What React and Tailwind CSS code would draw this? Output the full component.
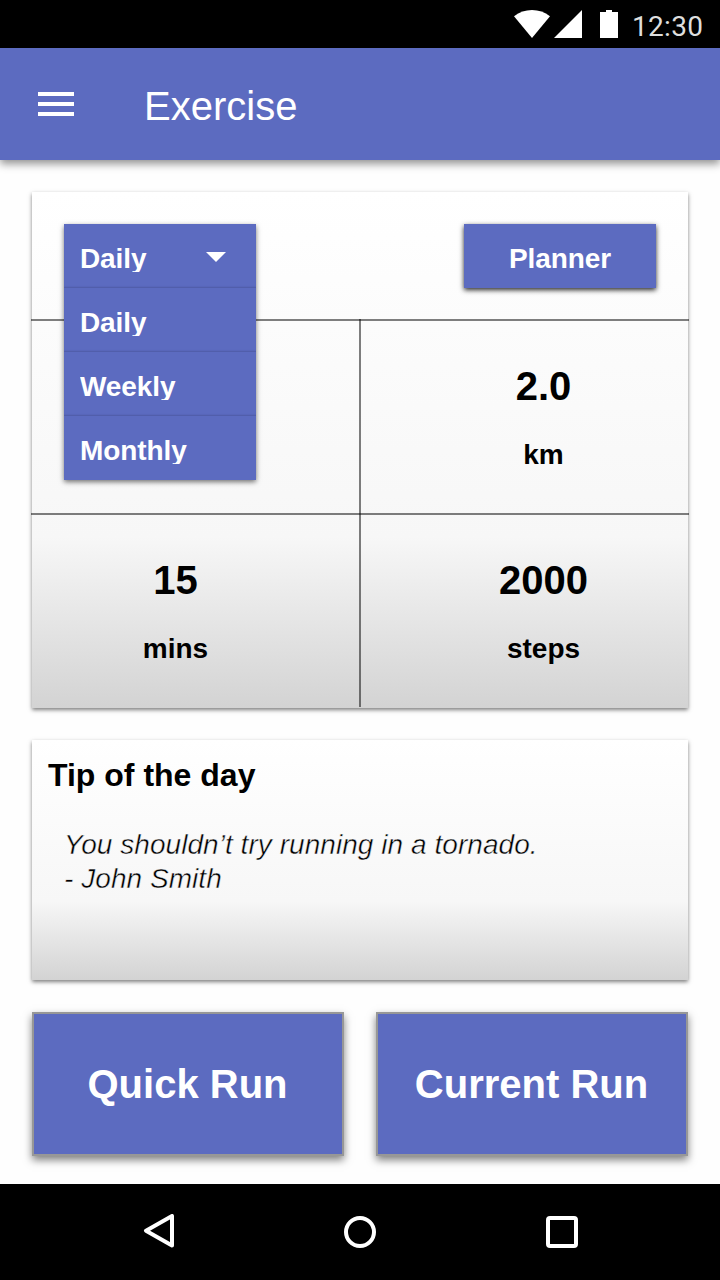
const PERIODS = ["Daily", "Weekly", "Monthly"];

function StatusBar() {
  return (
    <div className="flex h-12 shrink-0 items-center justify-end bg-black pr-4 text-[#dedede]">
      <svg className="h-7 w-[104px]" viewBox="0 0 104 28" fill="#fff">
        <path d="M0 6.2Q8 0 18 0T36 6.2L18 28Z" />
        <path d="M68 0V28H40Z" />
        <path d="M86 2H92V0H98V2H104V28H86Z" />
      </svg>
      <span className="ml-[14px] mt-[6px] w-[72px] whitespace-nowrap font-['Roboto',sans-serif] text-[28px] font-normal leading-8 tracking-[0.3px]">
        12:30
      </span>
    </div>
  );
}

function AppBar() {
  return (
    <header className="flex h-28 shrink-0 items-center bg-[#5c6bc0] pl-[38px] text-white shadow-[0_4px_8px_rgba(0,0,0,0.42)]">
      <button aria-label="Menu" className="flex w-9 flex-col gap-[6px]">
        <span className="h-1 bg-white" />
        <span className="h-1 bg-white" />
        <span className="h-1 bg-white" />
      </button>
      <h1 className="ml-[70px] mt-1 text-[40px] leading-[48px]">Exercise</h1>
    </header>
  );
}

function PeriodRow({ label, caret, last }) {
  return (
    <div
      className={
        last
          ? "flex h-16 items-start px-4 pt-4"
          : "flex h-16 items-start px-4 pt-4 shadow-[inset_0_-1px_0_#515eab,inset_0_-2px_1px_#5866b8]"
      }
    >
      <span className="h-8 overflow-hidden pr-1 text-[28px] font-bold leading-[38px] tracking-[-0.1px]">{label}</span>
      {caret && (
        <svg className="ml-auto mr-[14px] mt-3 h-[10px] w-5" viewBox="0 0 20 10" fill="#fff">
          <path d="M0 0H20L10 10Z" />
        </svg>
      )}
    </div>
  );
}

function PeriodMenu() {
  return (
    <div className="relative h-16 w-48">
      <div className="absolute inset-x-0 top-0 z-10 bg-[#5c6bc0] text-white shadow-[0_2px_5px_rgba(0,0,0,0.55)]">
        <PeriodRow label="Daily" caret />
        {PERIODS.map((p, i) => (
          <PeriodRow key={p} label={p} last={i === PERIODS.length - 1} />
        ))}
      </div>
    </div>
  );
}

function Stat({ value, unit }) {
  return (
    <div className="flex flex-col items-center gap-[29px] text-black">
      <span className="text-[40px] font-bold leading-[48px]">{value}</span>
      <span className="text-[28px] font-bold leading-8">{unit}</span>
    </div>
  );
}

function StatRow({ left, right }) {
  return (
    <div className="-mx-px flex h-[194px] border-t-2 border-black/50">
      <div className="w-[328px] pr-[39px] pt-[41px]">{left}</div>
      <div className="-mt-[2px] flex-1 border-l-2 border-black/50 pl-[37px] pt-[43px]">{right}</div>
    </div>
  );
}

const card =
  "bg-[linear-gradient(180deg,#ffffff_0%,#f7f7f7_67%,#d3d3d3_100%)] shadow-[0_2px_4px_rgba(0,0,0,0.5)]";

function BigButton({ children }) {
  return (
    <button className="flex h-36 flex-1 items-center justify-center border-2 border-[#979797] bg-[#5c6bc0] pr-px text-[40px] font-bold leading-[48px] text-white shadow-[0_4px_8px_rgba(0,0,0,0.5)]">
      {children}
    </button>
  );
}

export default function App() {
  return (
    <div className="flex h-[1280px] w-[720px] flex-col overflow-hidden bg-[#fefefe] font-['Liberation_Sans',Arial,sans-serif]">
      <StatusBar />
      <AppBar />
      <main className="flex flex-1 flex-col gap-8 p-8 pb-7">
        <section className={`h-[516px] ${card}`}>
          <div className="flex h-[127px] justify-between px-8 pt-8">
            <PeriodMenu />
            <button className="h-16 w-48 bg-[#5c6bc0] pt-[6px] text-[28px] font-bold tracking-[-0.1px] text-white shadow-[0_2px_5px_rgba(0,0,0,0.85)]">
              Planner
            </button>
          </div>
          <StatRow right={<Stat value="2.0" unit="km" />} />
          <StatRow
            left={<Stat value="15" unit="mins" />}
            right={<Stat value="2000" unit="steps" />}
          />
        </section>

        <section className={`h-60 px-4 pt-4 text-black ${card}`}>
          <h2 className="text-[32px] font-bold leading-[38px]">Tip of the day</h2>
          <p className="ml-4 mt-[34px] whitespace-nowrap text-[28px] italic leading-[34px] tracking-[0.05px] [-webkit-text-stroke:0.45px_#fafafa]">
            You shouldn’t try running in a tornado.
            <br />- John Smith
          </p>
        </section>

        <div className="flex gap-8">
          <BigButton>Quick Run</BigButton>
          <BigButton>Current Run</BigButton>
        </div>
      </main>
      <nav className="flex h-24 shrink-0 items-center justify-between bg-black pl-[142px] pr-[140px]">
        <svg className="h-9 w-9" viewBox="0 0 36 36" fill="none" stroke="#fff" strokeWidth="4" strokeLinejoin="round">
          <path d="M30 2V31.5L4 16.7Z" />
        </svg>
        <svg className="-ml-[2px] h-9 w-9" viewBox="0 0 36 36" fill="none" stroke="#fff" strokeWidth="4">
          <circle cx="18" cy="18" r="14" />
        </svg>
        <svg className="h-9 w-9" viewBox="0 0 36 36" fill="none" stroke="#fff" strokeWidth="4">
          <rect x="4" y="4" width="28" height="28" rx="2" />
        </svg>
      </nav>
    </div>
  );
}
